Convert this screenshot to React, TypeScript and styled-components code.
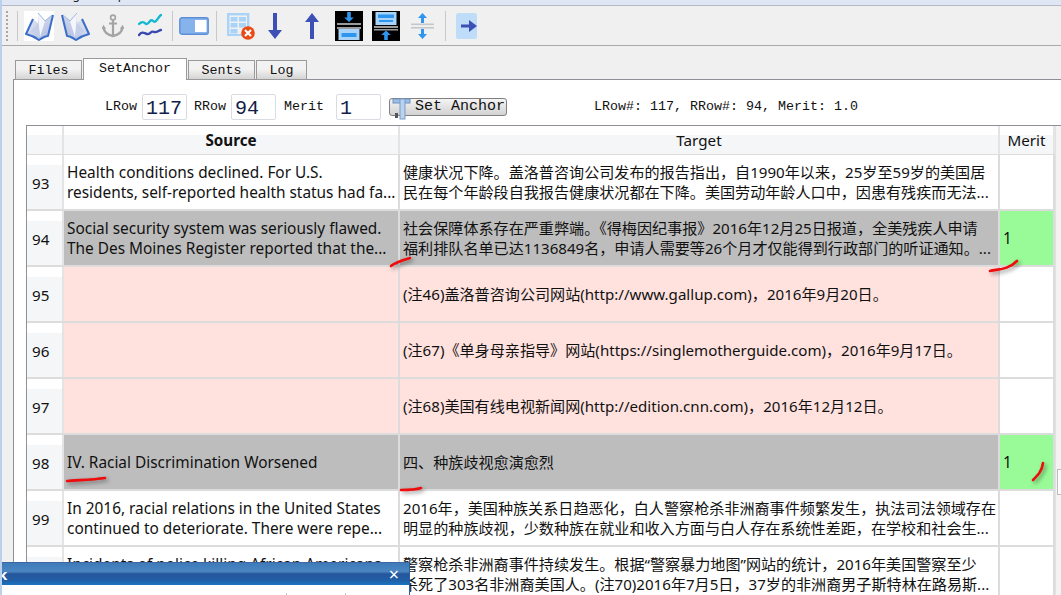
import React from "react";
import styled, { createGlobalStyle } from "styled-components";

const Global = createGlobalStyle`
  html, body { margin: 0; padding: 0; width: 1061px; height: 595px; overflow: hidden; background: #f0f0f0; }
  #root { width: 1061px; height: 595px; }
`;
const MONO = `"Liberation Mono", "DejaVu Sans Mono", monospace`;
const SANS = `"Noto Sans", "Noto Sans CJK SC", sans-serif`;

const Page = styled.div`
  position: relative; width: 1061px; height: 595px; overflow: hidden;
  display: flex; flex-direction: column; background: #f0f0f0; border-left: 2px solid #b9d1ea; box-sizing: border-box;
`;
const TitleStrip = styled.div`
  height: 5px; flex: none; background: #dfe7f5; border-bottom: 1px solid #b4b9c4; overflow: hidden;
  font: 12px/14px ${SANS}; color: #222; padding-left: 48px; white-space: nowrap; box-sizing: content-box;
  margin-left: -2px;
`;
const TitleText = styled.span` display: block; margin-top: -12px; `;
const Toolbar = styled.div`
  height: 39px; flex: none; display: flex; align-items: center; background: #f0f0f0;
  border-bottom: 1px solid #a9a9a9; box-sizing: content-box;
`;
const Grip = styled.div`
  width: 2px; height: 30px; margin-left: 4px;
  background: repeating-linear-gradient(to bottom, #a8a8a8 0 2px, transparent 2px 4px);
`;
const Sep = styled.div<{ $ml: number }>`
  width: 1px; height: 30px; background: #c8c8c8; margin-left: ${p => p.$ml}px;
`;
const Tool = styled.svg<{ $ml: number; $bg?: string }>`
  flex: none; display: block; margin-left: ${p => p.$ml}px; background: ${p => p.$bg || "transparent"};
`;
const Body = styled.div`
  flex: 1; min-height: 0; display: flex; flex-direction: column; padding: 12px 0 0 11px;
`;
const Tabs = styled.div`
  display: flex; height: 22px; padding-left: 2px; align-items: flex-end; flex: none; position: relative; z-index: 1; margin-bottom: -1px;
`;
const Tab = styled.div<{ $w: number; $active?: boolean }>`
  box-sizing: border-box; width: ${p => p.$w}px; height: ${p => (p.$active ? 22 : 20)}px;
  margin-right: 1px;
  border: 1px solid #9a9a9a; ${p => p.$active ? "border-bottom: 0;" : ""}
  background: ${p => p.$active ? "#fff" : "linear-gradient(#f2f2f2 0 45%, #d4d4d4 100%)"};
  font: 13.33px/20px ${MONO}; color: #111; text-align: center;
`;
const Panel = styled.div`
  flex: 1; min-height: 0; background: #fff; border-left: 1px solid #8f8f98; border-top: 1px solid #8f8f98;
  display: flex; flex-direction: column;
`;
const Controls = styled.div`
  height: 45px; flex: none; box-sizing: border-box; padding: 8px 0 0 91px; display: flex; align-items: center;
  font: 13.33px/1 ${MONO}; color: #111;
`;
const Label = styled.span<{ $ml: number }>` margin-left: ${p => p.$ml}px; white-space: nowrap; `;
const Num = styled.div<{ $w: number; $ml: number }>`
  box-sizing: border-box; width: ${p => p.$w}px; height: 26px; margin-left: ${p => p.$ml}px;
  border: 1px solid #d9dde3; border-radius: 2px; background: #fff;
  font: 20px/27px ${MONO}; color: #10204a; padding-left: 3px; overflow: hidden;
`;
const AnchorBtn = styled.div`
  box-sizing: border-box; width: 118px; height: 18px; margin-left: 8px; border: 1px solid #808080; border-radius: 3px;
  background: linear-gradient(#f4f4f4, #d2d2d2); display: flex; align-items: center; position: relative;
  font: 15px/1 ${MONO}; color: #111; padding-left: 25px; white-space: pre;
`;
const BtnIcon = styled.svg` position: absolute; left: 0; top: -3px; `;
const Status = styled.span` margin-left: 87px; white-space: nowrap; `;
const TableWrap = styled.div`
  flex: 1; min-height: 0; margin-left: 12px; display: flex; border-left: 1px solid #8f8f98; border-top: 1px solid #8f8f98;
`;
const Table = styled.div` width: 1028px; flex: none; display: flex; flex-direction: column; background: #fff; `;
const Row = styled.div<{ $h: number }>`
  display: grid; grid-template-columns: 37px 336px 600px 55px; height: ${p => p.$h}px; flex: none; box-sizing: border-box;
  border-bottom: 2px solid #dcdcdc;
`;
const HeadCell = styled.div<{ $bold?: boolean }>`
  box-sizing: border-box; border-right: 2px solid #e4e4e4;
  background: linear-gradient(#fff 0 9px, #f5f6f8 9px);
  font: ${p => (p.$bold ? 700 : 400)} 15.2px/28px ${SANS}; color: #111; text-align: center; white-space: nowrap;
`;
const RowNum = styled.div`
  box-sizing: border-box; border-right: 2px solid #e4e4e4; background: linear-gradient(#fff 0 10px, #f5f6f8 10px);
  font: 15.2px/20px ${SANS}; color: #111; padding: 18px 0 0 5px;
`;
const Cell = styled.div<{ $bg?: string; $cjk?: boolean; $center?: boolean }>`
  box-sizing: border-box; border-right: 2px solid #dcdcdc; background: ${p => p.$bg || "#fff"};
  font: ${p => (p.$cjk ? "15.1px" : "15.4px")}/20px ${SANS}; color: #111; overflow: hidden; white-space: nowrap;
  padding: ${p => (p.$center ? (p.$cjk ? "17px" : "18px") : p.$cjk ? "7px" : "8px")} 0 0 3px;
`;
const Line = styled.div``;
const Scroll = styled.div`
  flex: 1; background: #f3f3f3; border-left: 1px solid #e2e2e2; position: relative;
`;
const Thumb = styled.div`
  position: absolute; left: 1px; top: 343px; right: -2px; height: 24px; background: #fff; border: 1px solid #bdbdbd;
`;
const Marks = styled.svg`
  position: absolute; left: 0; top: 0; pointer-events: none; overflow: visible;
`;
const FloatWin = styled.div`
  position: absolute; left: -2px; bottom: 0; width: 410px; height: 33px; display: flex; flex-direction: column;
  border-right: 1px solid #2a5f9e; box-sizing: border-box; overflow: hidden;
`;
const WinTitle = styled.div`
  height: 23px; flex: none; display: flex; justify-content: space-between; align-items: center; padding: 0 10px 0 0;
  border-top: 1px solid #3c66a4; box-sizing: border-box;
  background: linear-gradient(#3f7ab9 0, #4a86c2 38%, #25569c 50%, #1f5ea6 78%, #1a74c0 100%);
  color: #fff;
`;
const WinName = styled.span` font: 700 15px/18px ${SANS}; margin-left: -2px; `;
const CloseMark = styled.span` font: 400 18px/20px ${SANS}; `;
const WinBody = styled.div`
  flex: 1; background: #fff; overflow: hidden;
`;

const Book = ({ ml, bg, flip }: { ml: number; bg?: string; flip?: boolean }) => (
  <Tool $ml={ml} $bg={bg} width={30} height={30} viewBox="0 0 30 30">
    <defs>
      <linearGradient id="pg" x1="0" y1="0" x2="1" y2="1">
        <stop offset="0" stopColor="#eef0f9" />
        <stop offset="1" stopColor="#aab8de" />
      </linearGradient>
    </defs>
    <g transform={flip ? "translate(30,0) scale(-1,1)" : undefined}>
      <path d="M2 23 L9 8 L14 12 L14 2 L21 10 L28 4 L24 24 L16 28 Z" fill="url(#pg)" />
      <path d="M14 2 L16 26 L21 10 Z" fill="#f5f6fc" />
      <path d="M14 12 L16 26 L7 20 Z" fill="#c6cfe8" />
      <path d="M9 8 L2 23 C6 24 11 26 15 29 C18 27 21 25 24 25 L29 4" fill="none" stroke="#3c6ec8" strokeWidth="2" strokeLinejoin="round" />
      <path d="M14 2 L21 10 L28 4" fill="none" stroke="#9db6e2" strokeWidth="1" />
    </g>
  </Tool>
);
const Anchor = () => (
  <Tool $ml={11} width={22} height={24} viewBox="0 0 22 24" fill="none" stroke="#a4a4a4">
    <circle cx="11" cy="3.5" r="2.4" strokeWidth="1.6" />
    <path d="M11 6v16M7 9.5h8" strokeWidth="2.2" />
    <path d="M1.5 13 C2 19 6 21 11 22 C16 21 20 19 20.5 13" strokeWidth="2.4" />
    <path d="M0 15l1.5-3 2 3M18.5 15l2-3 1.5 3" strokeWidth="1.2" />
  </Tool>
);
const Chart = () => (
  <Tool $ml={14} width={24} height={26} viewBox="0 0 24 26" fill="none" strokeWidth="2.4" strokeLinecap="round">
    <path d="M1 11 C4 8 6 9 8 11 C11 12 12 5 15 8 C18 11 20 4 23 2" stroke="#12b8cf" />
    <path d="M1 22 C4 18 6 20 9 21 C12 22 13 17 16 19 C19 20 21 17 23 17" stroke="#3a49b2" />
  </Tool>
);
const Toggle = () => (
  <Tool $ml={6} width={30} height={18} viewBox="0 0 30 18">
    <rect x="0.8" y="0.8" width="28.4" height="16.4" rx="2" fill="#86b3ec" stroke="#5c8fd8" strokeWidth="1.4" />
    <rect x="16" y="3" width="11.5" height="12" fill="#fff" />
  </Tool>
);
const GridX = () => (
  <Tool $ml={10} width={28} height={28} viewBox="0 0 28 28">
    <g fill="#a9d3f7">
      <rect x="0" y="1" width="22" height="2.4" /><rect x="0" y="1" width="2.4" height="22" /><rect x="20" y="1" width="2.4" height="14" />
      <rect x="3.5" y="5" width="7" height="4.5" /><rect x="12" y="5" width="7" height="4.5" />
      <rect x="3.5" y="11" width="7" height="4.5" /><rect x="12" y="11" width="7" height="4.5" />
      <rect x="3.5" y="17" width="7" height="4.5" /><rect x="0" y="22" width="15" height="2" />
    </g>
    <circle cx="21" cy="21" r="6.8" fill="#ea4a13" />
    <path d="M18 18l6 6M24 18l-6 6" stroke="#fff" strokeWidth="2.2" />
  </Tool>
);
const ArrowV = ({ ml, up }: { ml: number; up?: boolean }) => (
  <Tool $ml={ml} width={14} height={28} viewBox="0 0 14 28">
    <path transform={up ? "rotate(180 7 14)" : undefined} d="M5 1h4v17h5l-7 9-7-9h5z" fill="#3c50b5" />
  </Tool>
);
const BlackDown = () => (
  <Tool $ml={16} $bg="#000" width={28} height={30} viewBox="0 0 28 30">
    <path d="M12.2 1h3.6v5.5h3L14 11 9.200 6.500h3z" fill="#2f96ef" />
    <rect x="2" y="12" width="24" height="2" fill="#9a9a9a" /><rect x="2" y="16" width="24" height="2" fill="#9a9a9a" />
    <rect x="3.500" y="18" width="21" height="11" fill="#a9d3f7" /><rect x="6.500" y="22" width="15" height="4" fill="#2f96ef" />
  </Tool>
);
const BlackUp = () => (
  <Tool $ml={9} $bg="#000" width={28} height={30} viewBox="0 0 28 30">
    <rect x="3.500" y="1" width="21" height="13" fill="#a9d3f7" /><rect x="6" y="3.500" width="16" height="3.500" fill="#2f96ef" /><rect x="7" y="9" width="14" height="2" fill="#2f96ef" />
    <rect x="2" y="15" width="24" height="2" fill="#9a9a9a" /><rect x="2" y="18" width="24" height="1.500" fill="#9a9a9a" />
    <path d="M12.2 29v-5h-3l4.800-4.500 4.800 4.500h-3v5z" fill="#2f96ef" />
  </Tool>
);
const Expand = () => (
  <Tool $ml={11} width={23} height={28} viewBox="0 0 23 28">
    <path d="M11.5 1l4.500 5h-3v5h-3V6H7z" fill="#2f96ef" />
    <rect x="0" y="11.500" width="23" height="1.600" fill="#c4c8cc" /><rect x="0" y="15" width="23" height="1.600" fill="#c4c8cc" />
    <path d="M11.5 27l4.500-5h-3v-5h-3v5H7z" fill="#2f96ef" />
  </Tool>
);
const ArrowBox = () => (
  <Tool $ml={10} width={22} height={26} viewBox="0 0 22 26">
    <rect width="21" height="26" rx="2.500" fill="#bfdcf8" />
    <path d="M5 11.500h8V7l8 6-8 6v-4.500H5z" fill="#3c50b5" />
  </Tool>
);

const Src = (s: string[]) => s.map((l, i) => <Line key={i}>{l}</Line>);

const rows = [
  { n: 93, s: ["Health conditions declined. For U.S.", "residents, self-reported health status had fa..."], t: ["健康状况下降。盖洛普咨询公司发布的报告指出，自1990年以来，25岁至59岁的美国居", "民在每个年龄段自我报告健康状况都在下降。美国劳动年龄人口中，因患有残疾而无法..."] },
  { n: 94, kind: "g", m: "1", s: ["Social security system was seriously flawed.", "The Des Moines Register reported that the..."], t: ["社会保障体系存在严重弊端。《得梅因纪事报》2016年12月25日报道，全美残疾人申请", "福利排队名单已达1136849名，申请人需要等26个月才仅能得到行政部门的听证通知。..."] },
  { n: 95, kind: "p", s: [], t: ["(注46)盖洛普咨询公司网站(http://www.gallup.com)，2016年9月20日。"] },
  { n: 96, kind: "p", s: [], t: ["(注67)《单身母亲指导》网站(https://singlemotherguide.com)，2016年9月17日。"] },
  { n: 97, kind: "p", s: [], t: ["(注68)美国有线电视新闻网(http://edition.cnn.com)，2016年12月12日。"] },
  { n: 98, kind: "g", m: "1", s: ["IV. Racial Discrimination Worsened"], t: ["四、种族歧视愈演愈烈"] },
  { n: 99, s: ["In 2016, racial relations in the United States", "continued to deteriorate. There were repe..."], t: ["2016年，美国种族关系日趋恶化，白人警察枪杀非洲裔事件频繁发生，执法司法领域存在", "明显的种族歧视，少数种族在就业和收入方面与白人存在系统性差距，在学校和社会生..."] },
  { n: 100, s: ["Incidents of police killing African Americans", "continued to occur."], t: ["警察枪杀非洲裔事件持续发生。根据“警察暴力地图”网站的统计，2016年美国警察至少", "杀死了303名非洲裔美国人。(注70)2016年7月5日，37岁的非洲裔男子斯特林在路易斯..."] },
];

const bgOf = (k?: string) => (k === "g" ? "#bdbdbd" : k === "p" ? "#ffe1de" : "#fff");

export default function App() {
  return (
    <Page>
      <Global />
      <TitleStrip><TitleText>Bilingual Map</TitleText></TitleStrip>
      <Toolbar>
        <Grip />
        <Sep $ml={9} />
        <Book ml={6} bg="#fff" />
        <Book ml={7} flip />
        <Anchor />
        <Chart />
        <Sep $ml={10} />
        <Toggle />
        <Sep $ml={7} />
        <GridX />
        <ArrowV ml={13} />
        <ArrowV ml={23} up />
        <BlackDown />
        <BlackUp />
        <Expand />
        <Sep $ml={11} />
        <ArrowBox />
      </Toolbar>
      <Body>
        <Tabs>
          <Tab $w={67}>Files</Tab>
          <Tab $w={104} $active>SetAnchor</Tab>
          <Tab $w={67}>Sents</Tab>
          <Tab $w={51}>Log</Tab>
        </Tabs>
        <Panel>
          <Controls>
            <Label $ml={0}>LRow</Label>
            <Num $w={45} $ml={5}>117</Num>
            <Label $ml={7}>RRow</Label>
            <Num $w={45} $ml={5}>94</Num>
            <Label $ml={8}>Merit</Label>
            <Num $w={45} $ml={12}>1</Num>
            <AnchorBtn>
              <BtnIcon width={24} height={24} viewBox="0 0 24 24">
                <rect x="3" y="3" width="17" height="4" fill="#9cc0e8" stroke="#6f93bd" />
                <rect x="10" y="3" width="5" height="20" fill="#b9d3ef" stroke="#7a9cc4" />
                <rect x="5" y="17" width="3" height="5" fill="#555" />
              </BtnIcon>
              Set Anchor
            </AnchorBtn>
            <Status>LRow#: 117, RRow#: 94, Merit: 1.0</Status>
          </Controls>
          <TableWrap>
            <Table>
              <Row $h={29}>
                <HeadCell />
                <HeadCell $bold>Source</HeadCell>
                <HeadCell>Target</HeadCell>
                <HeadCell>Merit</HeadCell>
              </Row>
              {rows.map(r => (
                <Row $h={56} key={r.n}>
                  <RowNum>{r.n}</RowNum>
                  <Cell $bg={bgOf(r.kind)} $center={r.s.length === 1}>{Src(r.s)}</Cell>
                  <Cell $bg={bgOf(r.kind)} $cjk $center={r.t.length === 1}>{Src(r.t)}</Cell>
                  <Cell $bg={r.m ? "#98fb98" : "#fff"} $center>{r.m}</Cell>
                </Row>
              ))}
            </Table>
            <Scroll><Thumb /></Scroll>
          </TableWrap>
        </Panel>
      </Body>
      <Marks width={1061} height={595} viewBox="0 0 1061 595" fill="none" stroke="#ee0808" strokeWidth="2.6" strokeLinecap="round">
        <defs>
          <filter id="sh" x="-30%" y="-80%" width="160%" height="300%">
            <feDropShadow dx="2" dy="2" stdDeviation="2" floodColor="#000" floodOpacity="0.45" />
          </filter>
        </defs>
        <g filter="url(#sh)" transform="translate(-2,0)">
          <path d="M391 266 C396 262 403 260 410 258" />
          <path d="M990 271 C998 269 1008 270 1017 261" />
          <path d="M1033 480 C1038 475 1042 471 1043 463" />
          <path d="M67 481 C78 480 92 480 105 478" />
          <path d="M401 490 C408 490 415 490 421 488" />
        </g>
      </Marks>
      <FloatWin>
        <WinTitle><WinName>k</WinName><CloseMark>×</CloseMark></WinTitle>
        <WinBody>
          <svg width={409} height={10} viewBox="0 0 409 10">
            <g fill="#8aaad8">
              <rect x="0" y="8.500" width="25" height="2" />
              <rect x="37" y="8.500" width="28" height="2" />
              <rect x="80" y="8.500" width="28" height="2" />
            </g>
            <path d="M124 9.500h23" stroke="#a8a8a8" strokeWidth="2" strokeDasharray="3 1.500" />
            <path d="M167 10V8M187 10V8" stroke="#e8a0a0" strokeWidth="2" />
            <path d="M175 6h5l-2.500 3z" fill="#7aa6d6" />
            <path d="M255 10l5-4h6l-2 4z" fill="#9fb3cc" />
            <path d="M286.500 4V10M345.500 4V10" stroke="#c4c4c4" />
            <rect x="294.500" y="8.500" width="28" height="3" fill="none" stroke="#9a9a9a" />
            <path d="M360 7h5l5 3h-10z" fill="#9fb3cc" />
          </svg>
        </WinBody>
      </FloatWin>
    </Page>
  );
}
